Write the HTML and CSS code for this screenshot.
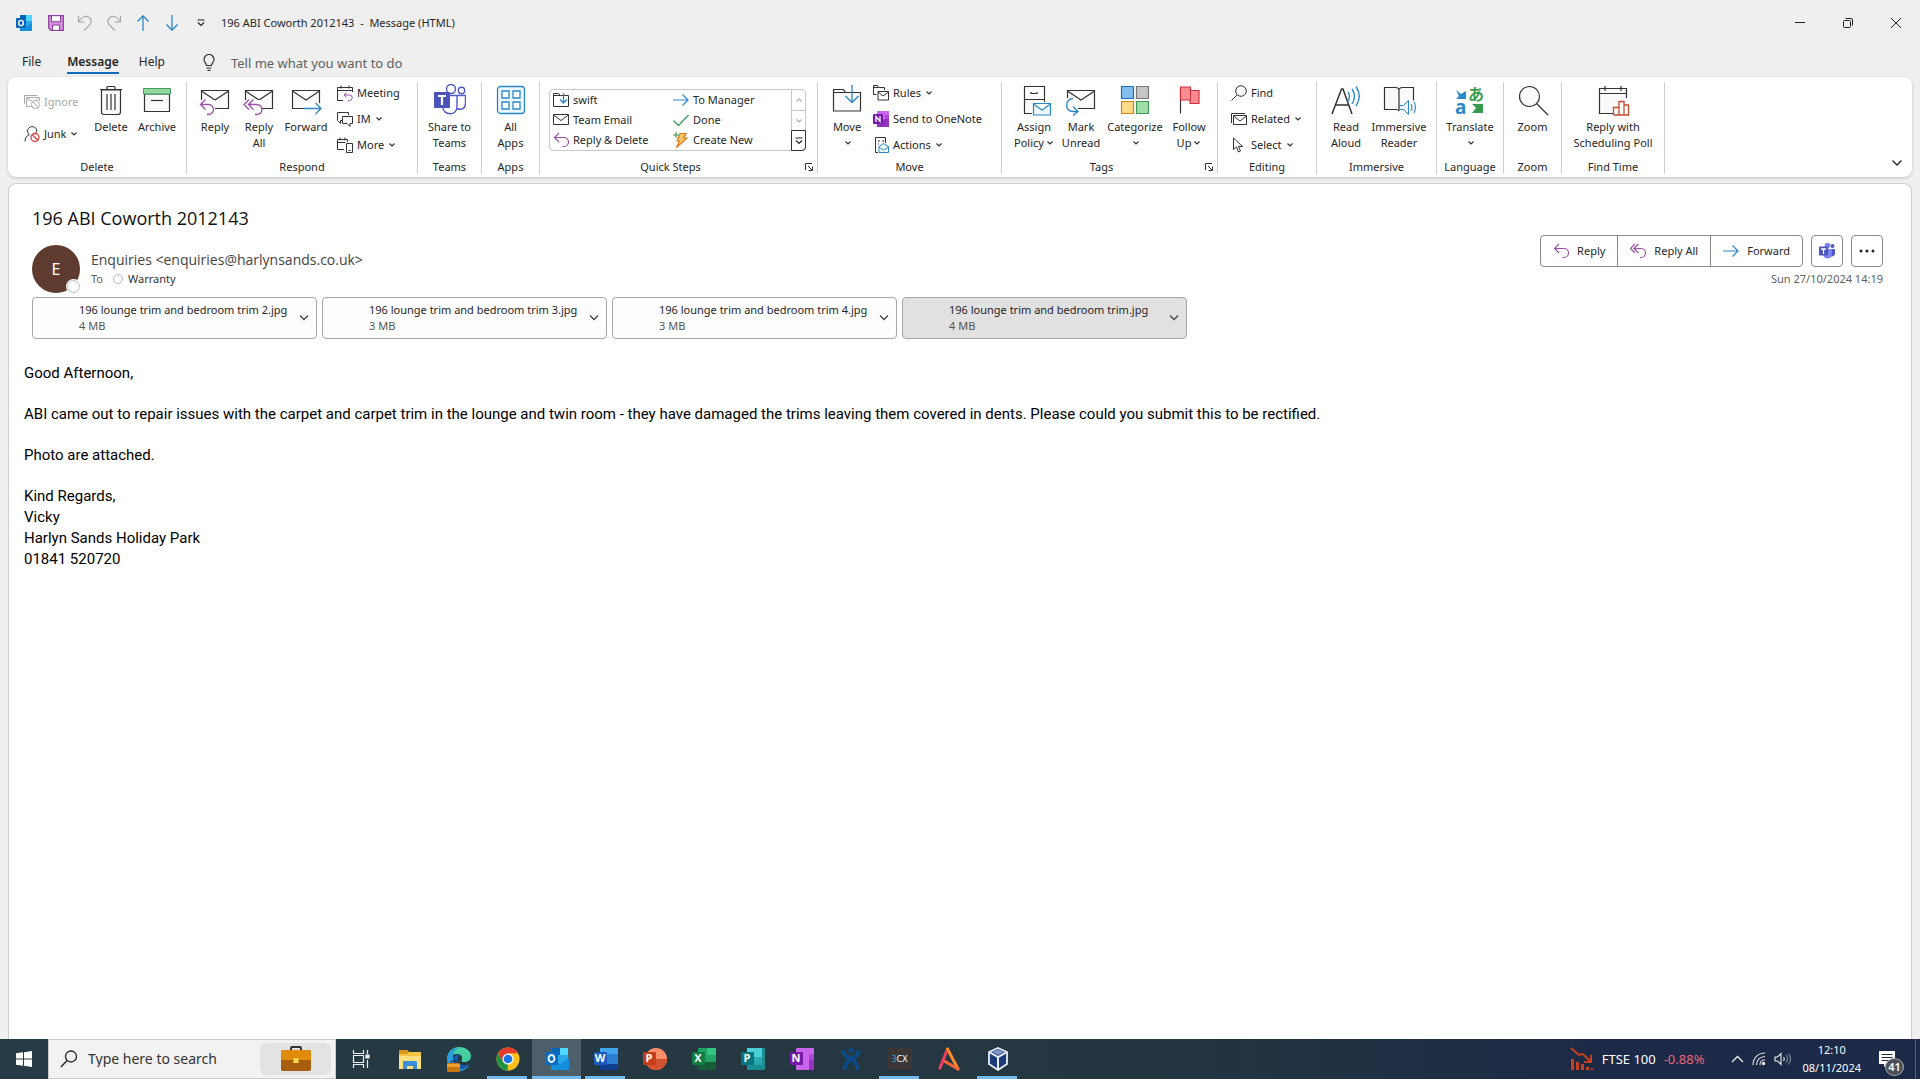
FILE: index.html
```html
<!DOCTYPE html>
<html lang="en">
<head>
<meta charset="utf-8">
<meta name="viewport" content="width=device-width, initial-scale=1">
<title>196 ABI Coworth 2012143 - Message (HTML)</title>
<link rel="stylesheet" href="styles.css">
</head>
<body>
<svg class="sprite" aria-hidden="true">
  <symbol id="chev" viewBox="0 0 8 8"><path d="M1.5 2.5 4 5l2.500-2.500" fill="none" stroke="#333" stroke-width="1.200"/></symbol>
  <symbol id="envelope" viewBox="0 0 32 32"><path d="M2.500 6.500h27v18h-27zM2.500 7 16 16 29.500 7" fill="#fafafa" stroke="#333" stroke-width="1.200"/></symbol>
  <symbol id="reply" viewBox="0 0 16 16"><path d="M6 1 1.500 5.500 6 10M1.500 5.500H11a4.500 4.500 0 0 1 0 9H9.500" fill="none" stroke="#9b4fa8" stroke-width="1.200"/></symbol>
  <symbol id="replyall" viewBox="0 0 16 16"><path d="M5 1 .500 5.500 5 10M8.500 1 4 5.500 8.500 10M4 5.500h7a4.500 4.500 0 0 1 0 9h-1" fill="none" stroke="#9b4fa8" stroke-width="1.200"/></symbol>
  <symbol id="forward" viewBox="0 0 16 16"><path d="M0 8h15M9.500 2.500 15 8l-5.500 5.500" fill="none" stroke="#2b88c8" stroke-width="1.200"/></symbol>
  <symbol id="launch" viewBox="0 0 8 8"><path d="M7 .5H.5V7M3 3l4 4M7.500 3.500v4h-4" fill="none" stroke="#333"/></symbol>
  <symbol id="drop" viewBox="0 0 10 10"><path d="M1.500 2h7M2 4.500 5 7.500l3-3" fill="none" stroke="#222" stroke-width="1.200"/></symbol>
  <symbol id="teams" viewBox="0 0 32 32"><g fill="#fff" stroke="#5059c9" stroke-width="1.400"><circle cx="27.500" cy="6.500" r="3.200"/><circle cx="17" cy="5" r="4.500"/><path d="M23 11.500h8.500v8c0 5-4 7-8.500 5M9 11.500h14v11c0 10-14 9-14 1"/></g><rect y="8" width="16" height="16" rx="1" fill="#4b53bc"/><path d="M4 12h8M8 12v9" stroke="#fff" stroke-width="2.200"/></symbol>
</svg>

<header class="titlebar">
  <div class="quick-access">
    <svg width="16" height="16" viewBox="0 0 16 16"><path d="M4 0h12v14H4z" fill="#28a8ea"/><path d="M4 0h6v6H4z" fill="#0364b8"/><path d="M10 0h6v6h-6z" fill="#50d9ff"/><path d="M4 8l6 4 6-4v8H4z" fill="#1490df"/><rect y="3" width="10" height="10" rx="1" fill="#0a64b8"/><ellipse cx="5" cy="8" rx="2.300" ry="2.600" fill="none" stroke="#fff" stroke-width="1.400"/></svg>
    <button aria-label="Save"><svg width="16" height="16" viewBox="0 0 16 16"><path d="M.7.7h14.600v14.600H3L.7 13z" fill="#d98fe0" stroke="#8b3a9b" stroke-width="1.200"/><path d="M3.500.700h9v6h-9zM4.500 10h7v5.300h-7z" fill="#fff" stroke="#8b3a9b"/></svg></button>
    <button aria-label="Undo"><svg width="16" height="16" viewBox="0 0 16 16"><path d="M1.500 1v6h6M1.500 7C5 1 9 .500 12 2.500c4 3 2 6.500-1 9L7 15.500" fill="none" stroke="#aaa" stroke-width="1.200"/></svg></button>
    <button aria-label="Redo"><svg width="16" height="16" viewBox="0 0 16 16"><path d="M14.500 1v6h-6M14.500 7C11 1 7 .500 4 2.500c-4 3-2 6.500 1 9l4 4" fill="none" stroke="#aaa" stroke-width="1.200"/></svg></button>
    <button aria-label="Previous item"><svg width="16" height="16" viewBox="0 0 16 16"><path d="M8 16V.800M2.500 6.500 8 .800l5.500 5.700" fill="none" stroke="#2b88c8" stroke-width="1.300"/></svg></button>
    <button aria-label="Next item"><svg width="16" height="16" viewBox="0 0 16 16"><path d="M8 0v15.200M2.500 9.500 8 15.200l5.500-5.700" fill="none" stroke="#2b88c8" stroke-width="1.300"/></svg></button>
    <button aria-label="Customize toolbar"><svg width="10" height="10"><use href="#drop"/></svg></button>
  </div>
  <h1 class="window-title">196 ABI Coworth 2012143&nbsp; -&nbsp; Message (HTML)</h1>
  <div class="window-buttons">
    <button aria-label="Minimize"><svg width="12" height="12"><path d="M1 5.500h10" stroke="#222"/></svg></button>
    <button aria-label="Restore"><svg width="12" height="12" fill="none" stroke="#222"><rect x="1.500" y="3.500" width="7" height="7" rx="1"/><path d="M3.500 1.500H9q1.500 0 1.500 1.500v5.500"/></svg></button>
    <button aria-label="Close"><svg width="12" height="12"><path d="M1 1l10 10M11 1 1 11" stroke="#222"/></svg></button>
  </div>
</header>

<nav class="tabs">
  <a href="#file">File</a>
  <a href="#message" class="active">Message</a>
  <a href="#help">Help</a>
  <label class="tell-me">
    <svg width="12" height="17" viewBox="0 0 12 17"><path d="M3.500 11.500C3.500 9 1 8.500 1 5.500a5 5 0 0 1 10 0c0 3-2.500 3.500-2.500 6zM3.500 14h5M4.500 16.300h3" fill="none" stroke="#333" stroke-width="1.200"/></svg>
    <input type="text" placeholder="Tell me what you want to do">
  </label>
</nav>

<section class="ribbon" aria-label="Ribbon">
  <div class="group g-delete">
    <div class="tools">
      <div class="stack two w64">
        <button disabled><svg width="16" height="16" viewBox="0 0 16 16" fill="none" stroke="#aaa"><path d="M.5 10V1.500h13M9 12.500H2.500v-9h13V7M2.500 4 9 8l5-3"/><circle cx="11.500" cy="10.500" r="4" fill="#fff"/><path d="M9 8l5 5"/></svg>Ignore</button>
        <button><svg width="16" height="16" viewBox="0 0 16 16" fill="none"><path d="M1 15.500c0-4 2-6 4-6.500M5.500 9C2 6 3.500.700 8 .700S14 5 11.500 7" stroke="#333"/><circle cx="11" cy="11.500" r="4" stroke="#d64545" stroke-width="1.300"/><path d="M8.200 8.700l5.600 5.600" stroke="#d64545" stroke-width="1.300"/></svg>Junk<svg class="chev"><use href="#chev"/></svg></button>
      </div>
      <button class="big w46"><svg viewBox="0 0 32 32"><path d="M6.500 6h19v22q0 2.500-2.500 2.500H9q-2.500 0-2.500-2.500zM5 5.500h22M12 5V3.500Q12 2.500 13 2.500h6q1 0 1 1V5M12 10v16M16 10v16M20 10v16" fill="#fafafa" stroke="#333" stroke-width="1.200"/></svg><span>Delete</span></button>
      <button class="big w46"><svg viewBox="0 0 32 32"><path d="M3.500 10h25v17.500h-25z" fill="#fafafa" stroke="#333" stroke-width="1.200"/><path d="M2.500 4.500h27V10h-27z" fill="#90d7a0" stroke="#3f9b58"/><path d="M10 16.500h12" stroke="#333" stroke-width="1.200"/></svg><span>Archive</span></button>
    </div>
    <h2>Delete</h2>
  </div>
  <div class="group g-respond">
    <div class="tools">
      <button class="big w44"><svg viewBox="0 0 32 32"><use href="#envelope"/><path d="M0 16h16v12H0z" fill="#fff"/><path d="M6.500 15.500 1.500 20.500l5 5M1.500 20.500h8a5 5 0 0 1 0 10H8" fill="none" stroke="#9b4fa8" stroke-width="1.300"/></svg><span>Reply</span></button>
      <button class="big w44"><svg viewBox="0 0 32 32"><use href="#envelope"/><path d="M0 16h18v12H0z" fill="#fff"/><path d="M6 15.500 1 20.500l5 5M10.500 15.500l-5 5 5 5M5.500 20.500H14a5 5 0 0 1 0 10h-2" fill="none" stroke="#9b4fa8" stroke-width="1.300"/></svg><span>Reply<br>All</span></button>
      <button class="big w50"><svg viewBox="0 0 32 32"><use href="#envelope"/><path d="M14 19h18v9H14z" fill="#fff"/><path d="M14 24.500h17M25.500 19l5.500 5.500-5.500 5.500" fill="none" stroke="#2b88c8" stroke-width="1.300"/></svg><span>Forward</span></button>
      <div class="stack">
        <button><svg width="16" height="16" viewBox="0 0 16 16" fill="none" stroke="#333"><path d="M6 15.500H.5v-13h15V7M.5 5.500h15M4 .5v3M12 .5v3"/><path d="M9.500 7.500 7 10l2.500 2.500M7 10h5.500a2.500 2.500 0 0 1 0 5.500H11" stroke="#9b4fa8"/></svg>Meeting</button>
        <button><svg width="16" height="16" viewBox="0 0 16 16" fill="none" stroke="#333"><path d="M5 9.500H3.500v3l-3-3V1.500h11V4M5.500 5.500h10v7H13v3l-3-3H5.500z"/></svg>IM<svg class="chev"><use href="#chev"/></svg></button>
        <button><svg width="16" height="16" viewBox="0 0 16 16" fill="none" stroke="#333"><path d="M7 12.500H.5v-10h10V5M.5 5.500h8M3 .5v3M8 .5v3M9.500 6.500h6v9h-6zM11.500 13.500h2"/></svg>More<svg class="chev"><use href="#chev"/></svg></button>
      </div>
    </div>
    <h2>Respond</h2>
  </div>
  <div class="group g-teams center">
    <div class="tools"><button class="big w50"><svg viewBox="0 0 32 32"><use href="#teams"/></svg><span>Share to<br>Teams</span></button></div>
    <h2>Teams</h2>
  </div>
  <div class="group g-apps center">
    <div class="tools"><button class="big w44"><svg viewBox="0 0 32 32" fill="#fff" stroke="#2b88c8" stroke-width="1.300"><rect x="2.500" y="2.500" width="27" height="27" rx="3" fill="#eef7fd"/><path d="M7 7h7v7H7zM18 7h7v7h-7zM7 18h7v7H7zM18 18h7v7h-7z"/></svg><span>All<br>Apps</span></button></div>
    <h2>Apps</h2>
  </div>
  <div class="group g-quick">
    <div class="tools">
      <div class="gallery">
        <div class="steps">
          <button><svg width="16" height="16" viewBox="0 0 16 16" fill="none" stroke="#333"><path d="M8 3.500h7.500v11H.5v-13h5l2 2H.5"/><path d="M10.500 1v9.500M7 7.500l3.500 3.500L14 7.500" stroke="#2b88c8" stroke-width="1.300"/></svg>swift</button>
          <button><svg width="16" height="16"><use href="#forward"/></svg>To Manager</button>
          <button><svg width="16" height="16" viewBox="0 0 16 16"><path d="M.5 2.500h15v10H.5zM.5 3 8 8.500 15.500 3" fill="none" stroke="#333"/></svg>Team Email</button>
          <button><svg width="16" height="16" viewBox="0 0 16 16"><path d="M.5 8.500 5.500 13.500 15.500 3" fill="none" stroke="#3f9b58" stroke-width="1.300"/></svg>Done</button>
          <button><svg width="16" height="16"><use href="#reply"/></svg>Reply &amp; Delete</button>
          <button><svg width="16" height="16" viewBox="0 0 16 16"><path d="M7 1.500h6L10.500 6H14L3.500 15.500 6.500 9H4z" fill="#f9c66b" stroke="#e07b1a" stroke-width="1.200"/><path d="M3 0v6M0 3h6" stroke="#3f9b58" stroke-width="1.200"/></svg>Create New</button>
        </div>
        <div class="scroller">
          <button disabled aria-label="Scroll up"><svg class="up chev"><use href="#chev"/></svg></button>
          <button disabled aria-label="Scroll down"><svg class="chev"><use href="#chev"/></svg></button>
          <button class="more" aria-label="More quick steps"><svg width="10" height="10"><use href="#drop"/></svg></button>
        </div>
      </div>
    </div>
    <h2>Quick Steps</h2>
    <button class="launcher" aria-label="Quick Steps settings"><svg width="8" height="8"><use href="#launch"/></svg></button>
  </div>
  <div class="group g-move">
    <div class="tools">
      <button class="big w40"><svg viewBox="0 0 32 32"><path d="M2.500 27V5.500h10l2 3h15V27zM2.500 8.500h12" fill="#fafafa" stroke="#333" stroke-width="1.200"/><path d="M21 1v17M14.500 12l6.500 6.500 6.500-6.500" fill="none" stroke="#2b88c8" stroke-width="1.300"/></svg><span>Move<br><svg class="chev"><use href="#chev"/></svg></span></button>
      <div class="stack">
        <button><svg width="16" height="16" viewBox="0 0 16 16" fill="none" stroke="#333"><path d="M3.500 9.500h-3v-9h4l1 2h6V5M.500 2.500h5M5 6.500h10.500v8.500H5zM5 7l5 4 5.500-4"/></svg>Rules<svg class="chev"><use href="#chev"/></svg></button>
        <button><svg width="16" height="16" viewBox="0 0 16 16"><path d="M4 0h12v16H4z" fill="#ca64ea"/><path d="M12 4h4v4h-4z" fill="#ae4bd5"/><path d="M12 8h4v8H4v-4z" fill="#9332bf"/><rect y="3" width="10" height="10" rx="1" fill="#7719aa"/><path d="M3 11V5.500l4 5V5" fill="none" stroke="#fff" stroke-width="1.300"/></svg>Send to OneNote</button>
        <button><svg width="16" height="16" viewBox="0 0 16 16" fill="none" stroke="#333"><path d="M5 15.500H2.500V.5h10V6M5 4h2M9 4h2M5 7h1"/><path d="M6 9.500 10.500 6.500 15.500 9.500v6H6zM6 10l4.500 3 5-3" fill="#eef7fd" stroke="#2b88c8"/></svg>Actions<svg class="chev"><use href="#chev"/></svg></button>
      </div>
    </div>
    <h2>Move</h2>
  </div>
  <div class="group g-tags">
    <div class="tools">
      <button class="big w50"><svg viewBox="0 0 32 32"><path d="M14 29.500H6.500v-27h20V18M6.500 15.500h20M13 8v1.500h6V8" fill="none" stroke="#333" stroke-width="1.200"/><path d="M15.500 19.500h17v11.500h-17zM15.500 20l8.500 6 8.500-6" fill="#eef7fd" stroke="#2b88c8" stroke-width="1.200"/></svg><span>Assign<br>Policy<svg class="chev"><use href="#chev"/></svg></span></button>
      <button class="big w44"><svg viewBox="0 0 32 32"><use href="#envelope"/><path d="M0 14h13v14H0z" fill="#fff"/><path d="M8 14.500c-8 0-9 13 0 13h4M8 22.500l5 5-5 4" fill="none" stroke="#2b88c8" stroke-width="1.300"/></svg><span>Mark<br>Unread</span></button>
      <button class="big w64"><svg viewBox="0 0 32 32" stroke-width="1.200"><path d="M2.500 2.500h12v12h-12z" fill="#83beec" stroke="#1e6fb5"/><path d="M17.500 2.500h12v12h-12z" fill="#c8c6c4" stroke="#797775"/><path d="M2.500 17.500h12v12h-12z" fill="#f9dc8b" stroke="#d68500"/><path d="M17.500 17.500h12v12h-12z" fill="#a1dda9" stroke="#3f9b58"/></svg><span>Categorize<br><svg class="chev"><use href="#chev"/></svg></span></button>
      <button class="big w44"><svg viewBox="0 0 32 32"><path d="M7.500 3v26.500" stroke="#333" stroke-width="1.200"/><path d="M7.500 3h10v3.500h8.500v13h-9V16H7.500z" fill="#ff8a92" stroke="#c8323c" stroke-width="1.200"/><path d="M17.500 6v10" stroke="#c8323c"/></svg><span>Follow<br>Up<svg class="chev"><use href="#chev"/></svg></span></button>
    </div>
    <h2>Tags</h2>
    <button class="launcher" aria-label="Tags settings"><svg width="8" height="8"><use href="#launch"/></svg></button>
  </div>
  <div class="group g-editing">
    <div class="tools">
      <div class="stack">
        <button><svg width="16" height="16" viewBox="0 0 16 16" fill="none" stroke="#333"><circle cx="10" cy="6" r="5.300"/><path d="M6.300 9.700.500 15.500"/></svg>Find</button>
        <button><svg width="16" height="16" viewBox="0 0 16 16" fill="none" stroke="#333"><path d="M.5 12V2.500H14M2.500 4.500h13v9h-13zM2.500 5 9 10l6.500-5"/></svg>Related<svg class="chev"><use href="#chev"/></svg></button>
        <button><svg width="16" height="16" viewBox="0 0 16 16" fill="none" stroke="#333"><path d="M2.500 1v11.500l3-2.500 2 5 2-1-2-4.500h4z"/></svg>Select<svg class="chev"><use href="#chev"/></svg></button>
      </div>
    </div>
    <h2>Editing</h2>
  </div>
  <div class="group g-immersive">
    <div class="tools">
      <button class="big w46"><svg viewBox="0 0 32 32" fill="none"><path d="M2 30 11.500 5h1.500l9 25M5.500 21h13" stroke="#333" stroke-width="1.500"/><path d="M18 8q3 4 0 9M22 5q5 7 0 15M26 2.500q6.500 9.500 0 19.500" stroke="#2b88c8" stroke-width="1.400"/></svg><span>Read<br>Aloud</span></button>
      <button class="big w60"><svg viewBox="0 0 32 32"><path d="M16 27q-1-1.500-3-1.500H1.500v-22H13q2 0 3 2 1-2 3-2h11.500v13M16 5.500V27" fill="#fafafa" stroke="#333" stroke-width="1.200"/><path d="M16.500 21.500h4l5-5v14l-5-5h-4z" fill="#eef7fd" stroke="#2b88c8"/><path d="M28 20q2 3 0 7M31 18q3 5 0 11" fill="none" stroke="#2b88c8" stroke-width="1.200"/></svg><span>Immersive<br>Reader</span></button>
    </div>
    <h2>Immersive</h2>
  </div>
  <div class="group g-language center">
    <div class="tools"><button class="big w60"><svg viewBox="0 0 32 32"><path d="M2 6l5 4 5-3v8H2l3-3z" fill="#2b88c8"/><path d="M29 20H18l4 4-4 5h11z" fill="#3a9b50"/><text x="1" y="30" class="glyph-a">a</text><text x="14" y="16" class="glyph-ja">あ</text></svg><span>Translate<br><svg class="chev"><use href="#chev"/></svg></span></button></div>
    <h2>Language</h2>
  </div>
  <div class="group g-zoom center">
    <div class="tools"><button class="big w44"><svg viewBox="0 0 32 32"><circle cx="12.500" cy="12.500" r="10" fill="#fafafa" stroke="#333" stroke-width="1.200"/><path d="M19.500 19.500 31 31" stroke="#333" stroke-width="1.200"/></svg><span>Zoom</span></button></div>
    <h2>Zoom</h2>
  </div>
  <div class="group g-findtime center">
    <div class="tools"><button class="big w90"><svg viewBox="0 0 32 32"><path d="M16 29.500H2.500v-25h27V14M2.500 9.500h27M8 2v5M24 2v5" fill="#fafafa" stroke="#333" stroke-width="1.200"/><path d="M16.500 31v-7.500H22V31M22 31V17.500h5V31M27 21h4.500v10h-15" fill="#fff" stroke="#c8482c" stroke-width="1.300"/></svg><span>Reply with<br>Scheduling Poll</span></button></div>
    <h2>Find Time</h2>
  </div>
  <button class="collapse" aria-label="Collapse ribbon"><svg width="12" height="8"><path d="M1.500 1.500 6 6l4.500-4.500" fill="none" stroke="#222" stroke-width="1.300"/></svg></button>
</section>

<main class="message">
  <div class="head">
    <h2 class="subject">196 ABI Coworth 2012143</h2>
    <div class="who">
      <div class="avatar">E<i></i></div>
      <div class="people">
        <div class="from">Enquiries &lt;enquiries@harlynsands.co.uk&gt;</div>
        <div class="to"><span>To</span><i></i><b>Warranty</b></div>
      </div>
      <div class="actions">
        <div class="row">
          <div class="joined">
            <button><svg width="16" height="16"><use href="#reply"/></svg>Reply</button>
            <button><svg width="16" height="16"><use href="#replyall"/></svg>Reply All</button>
            <button><svg width="16" height="16"><use href="#forward"/></svg>Forward</button>
          </div>
          <button class="square" aria-label="Share to Teams"><svg width="18" height="18" viewBox="0 0 18 18"><circle cx="14.500" cy="4" r="2" fill="#5059c9"/><circle cx="9.500" cy="3.500" r="2.800" fill="#7b83eb"/><path d="M12 7h5v5q-1 3-4 2.500z" fill="#5059c9"/><path d="M5 7h9v5c0 6-9 6-9 0z" fill="#7b83eb"/><rect x="1" y="4.500" width="9" height="9" rx="1" fill="#4b53bc"/><path d="M3 7h5M5.500 7v5" stroke="#fff" stroke-width="1.300"/></svg></button>
          <button class="square" aria-label="More actions"><svg width="16" height="4" fill="#222"><circle cx="2" cy="2" r="1.500"/><circle cx="8" cy="2" r="1.500"/><circle cx="14" cy="2" r="1.500"/></svg></button>
        </div>
        <time datetime="2024-10-27T14:19">Sun 27/10/2024 14:19</time>
      </div>
    </div>
    <div class="attachments">
      <button><span>196 lounge trim and bedroom trim 2.jpg<small>4 MB</small></span><svg width="10" height="8"><path d="M1 1.500l4 4 4-4"/></svg></button>
      <button><span>196 lounge trim and bedroom trim 3.jpg<small>3 MB</small></span><svg width="10" height="8"><path d="M1 1.500l4 4 4-4"/></svg></button>
      <button><span>196 lounge trim and bedroom trim 4.jpg<small>3 MB</small></span><svg width="10" height="8"><path d="M1 1.500l4 4 4-4"/></svg></button>
      <button class="selected"><span>196 lounge trim and bedroom trim.jpg<small>4 MB</small></span><svg width="10" height="8"><path d="M1 1.500l4 4 4-4"/></svg></button>
    </div>
  </div>
  <article class="body">
    <p>Good Afternoon,</p>
    <p>ABI came out to repair issues with the carpet and carpet trim in the lounge and twin room - they have damaged the trims leaving them covered in dents. Please could you submit this to be rectified.</p>
    <p>Photo are attached.</p>
    <p>Kind Regards,<br>Vicky<br>Harlyn Sands Holiday Park<br>01841 520720</p>
  </article>
</main>

<footer class="taskbar">
  <button class="start" aria-label="Start"><svg width="16" height="16" fill="#fff"><path d="M0 2.300 7 1.300V7.500H0zM8 1.200 16 0v7.500H8zM0 8.500h7v6.200L0 13.700zM8 8.500h8V16l-8-1.200z"/></svg></button>
  <label class="search">
    <svg width="18" height="18" viewBox="0 0 18 18" fill="none" stroke="#222" stroke-width="1.300"><circle cx="11" cy="6.500" r="5.500"/><path d="M7 10.500 1 17"/></svg>
    <input type="text" placeholder="Type here to search">
    <span class="highlight"><svg width="32" height="26" viewBox="0 0 32 26"><path d="M11 5V2q0-1 1-1h8q1 0 1 1v3" fill="none" stroke="#333" stroke-width="2"/><rect x="1" y="4" width="30" height="21" rx="2" fill="#a85e0c"/><path d="M1 6q0-2 2-2h26q2 0 2 2v8H1z" fill="#e08a0e"/><rect x="13.500" y="12" width="5" height="5" fill="#ffd84a"/></svg></span>
  </label>
  <div class="apps">
    <button aria-label="Task view"><svg width="18" height="18" fill="none" stroke="#eee" stroke-width="1.200"><path d="M1.500 0v3.500h10V0M1.500 5.500h10v7h-10zM1.500 18v-3.500h10V18M15.500 0v4M15.500 10v8"/><path d="M14 5h3v3h-3z" fill="#eee"/></svg></button>
    <button aria-label="File Explorer"><svg width="24" height="24"><path d="M1 3h8l2 2h12v16H1z" fill="#f5c445"/><path d="M1 3h8l2 2-2 2H1z" fill="#d9971c"/><path d="M1 9h22v13H1z" fill="#ffdf7e"/><path d="M5 22v-7q0-1 1-1h12q1 0 1 1v7h-4v-3H9v3z" fill="#3a8fd6"/></svg></button>
    <button aria-label="Edge"><svg width="26" height="26"><path d="M1 14A12 12 0 0 1 13 1c7 0 12 4 12 9 0 4-3 6-7 6-2 0-3-1-2-3 1-3-2-5-5-5-5 0-9 3-10 6z" fill="#45cfa0"/><path d="M1 14C1 6 6 2 12 2c-5 3-5 7-5 10 0 6 5 10 10 9 3 0 5-1 6-2-2 4-6 6-10 6A12 12 0 0 1 1 14z" fill="#2a9fe0"/><path d="M7 13c1-4 5-5 7-4-4 3-3 10 4 10 2 0 4 0 5-1-2 4-6 6-9 5-4-1-7-5-7-10z" fill="#1459a8"/><rect x="1" y="17" width="13" height="9" rx="1" fill="#c9740c"/><path d="M5 17v-2h5v2" fill="none" stroke="#333"/><path d="M1 18h13v3H1z" fill="#eda02a"/></svg></button>
    <button class="running" aria-label="Chrome"><svg width="24" height="24"><circle cx="12" cy="12" r="11.500" fill="#fbc116"/><path d="M2 6.300A11.500 11.500 0 0 1 22 6.300H12L7 15z" fill="#e33b2e"/><path d="M2 6.300 7.300 15 12 17.500 11.500 23.500A11.500 11.500 0 0 1 2 6.300z" fill="#229342"/><circle cx="12" cy="12" r="5.500" fill="#fff"/><circle cx="12" cy="12" r="4.300" fill="#1a73e8"/></svg></button>
    <button class="running active" aria-label="Outlook"><svg width="24" height="24"><path d="M7 1h16v20H7z" fill="#28a8ea"/><path d="M7 1h8v7H7z" fill="#0364b8"/><path d="M15 1h8v7h-8z" fill="#50d9ff"/><path d="M6 11l9 6 9-6v12H6z" fill="#1490df"/><rect y="5" width="13" height="13" rx="1" fill="#0a6cc0"/><ellipse cx="6.500" cy="11.500" rx="3" ry="3.500" fill="none" stroke="#fff" stroke-width="1.800"/></svg></button>
    <button class="running" aria-label="Word"><svg width="24" height="24"><rect x="6" y="1" width="18" height="22" rx="1" fill="#2b7cd3"/><path d="M6 1h18v6H6z" fill="#41a5ee"/><path d="M6 17h18v6H6z" fill="#103f91"/><rect y="5" width="13" height="13" rx="1" fill="#185abd"/><text x="6" y="15" class="badge">W</text></svg></button>
    <button aria-label="PowerPoint"><svg width="24" height="24"><circle cx="13" cy="12" r="11" fill="#ff8f6b"/><path d="M2 12h22a11 11 0 0 1-22 0z" fill="#d35230"/><rect y="5" width="13" height="13" rx="1" fill="#c43e1c"/><text x="6" y="15" class="badge">P</text></svg></button>
    <button aria-label="Excel"><svg width="24" height="24"><rect x="6" y="1" width="18" height="22" rx="1" fill="#21a366"/><path d="M15 1h9v7h-9z" fill="#33c481"/><path d="M6 15h18v8H6z" fill="#185c37"/><rect y="5" width="13" height="13" rx="1" fill="#107c41"/><text x="6" y="15" class="badge">X</text></svg></button>
    <button aria-label="Publisher"><svg width="24" height="24"><rect x="6" y="1" width="18" height="22" rx="1" fill="#1a8c94"/><path d="M6 1h15v9H6z" fill="#4ad0d5"/><path d="M6 10h15v8H6z" fill="#29a8ae"/><rect y="5" width="13" height="13" rx="1" fill="#06757d"/><text x="6" y="15" class="badge">P</text></svg></button>
    <button aria-label="OneNote"><svg width="24" height="24"><rect x="6" y="1" width="18" height="22" rx="1" fill="#ca64ea"/><path d="M19 7h5v6h-5z" fill="#ae4bd5"/><path d="M19 13h5v10h-5z" fill="#9332bf"/><rect y="5" width="13" height="13" rx="1" fill="#7719aa"/><text x="6" y="15" class="badge">N</text></svg></button>
    <button aria-label="Jira"><svg width="24" height="24" fill="none" stroke="#0c4a86"><circle cx="12" cy="3.500" r="2.500" fill="#0c4a86" stroke="none"/><path d="M4 3q0 6 8 8.500Q20 9 20 3M12 11.500q-6 4-6.500 11.500M12 11.500q6 4 6.500 11.500" stroke-width="4"/></svg></button>
    <button class="running" aria-label="3CX"><span class="cx"><em>3</em>CX</span></button>
    <button aria-label="Affinity"><svg width="24" height="24" fill="none" stroke-width="3" stroke-linecap="round" stroke-linejoin="round"><path d="M3 21 10.500 2" stroke="#ee3f62"/><path d="M10.500 2 21 22" stroke="#ff8a2a"/><path d="M21 22 8 14.500" stroke="#f9653a"/></svg></button>
    <button class="running" aria-label="VirtualBox"><svg width="24" height="24"><path d="M12 1l9 4v12l-9 6-9-6V5z" fill="#1c3a78" stroke="#e8edf6" stroke-width="1.800"/><path d="M3 5l9 5 9-5M12 10v13" fill="none" stroke="#e8edf6" stroke-width="2"/><path d="M6 5l6-2.500L18 5l-6 3z" fill="#7c95c4"/></svg></button>
  </div>
  <div class="tray">
    <button class="news"><svg width="24" height="24" fill="none" stroke="#c8401e" stroke-width="2"><path d="M1 1l8 7 4-1 7 7M21 8v7h-7"/><path d="M2.500 12v11M7.500 15v8M12.500 17v6M17.500 20v3M22 21.500v1.500" stroke-width="3"/></svg>FTSE 100<span>-0.88%</span></button>
    <button aria-label="Hidden icons"><svg width="13" height="8"><path d="M1 7l5.500-5.500L12 7" fill="none" stroke="#eee" stroke-width="1.300"/></svg></button>
    <button aria-label="Network"><svg width="14" height="14" fill="none" stroke="#ddd" stroke-width="1.200"><path d="M1 13C1 6 6 1 13 1M4.500 13c0-5 3.500-8.500 8.500-8.500M8 13c0-3 2-5 5-5"/><circle cx="11.500" cy="11.500" r="1.200" fill="#fff"/></svg></button>
    <button aria-label="Volume"><svg width="17" height="14" fill="none" stroke="#eee" stroke-width="1.100"><path d="M1 5h2.500L7 1.500v11L3.500 9H1zM9.500 5q1.500 2 0 4"/><path d="M12 3q3 4 0 8M14.500 1.500q4 5.500 0 11" stroke="#7c8797"/></svg></button>
    <time class="clock" datetime="2024-11-08T12:10">12:10<br>08/11/2024</time>
    <button class="notify" aria-label="Notifications"><svg width="16" height="16"><path d="M0 0h16v13H8l-3 3v-3H0z" fill="#fff"/><path d="M2.500 3.500h11M2.500 6.500h11M2.500 9.500h8" stroke="#1e2b44"/></svg><span>41</span></button>
  </div>
</footer>
</body>
</html>
```
FILE: styles.css
```css
* { box-sizing: border-box; }
html { height: 100%; }
body {
  margin: 0;
  min-height: 100%;
  display: flex;
  flex-direction: column;
  background: #efefef;
  color: #262626;
  font: 11px/16px "Noto Sans", "Open Sans", sans-serif;
}
h1, h2, p { margin: 0; font-weight: 400; }
button {
  display: flex;
  align-items: center;
  justify-content: center;
  padding: 0;
  border: 0;
  background: none;
  color: inherit;
  font: inherit;
  white-space: nowrap;
}
button:disabled { color: #a8a8a8; }
input {
  min-width: 0;
  padding: 0;
  border: 0;
  background: none;
  font: inherit;
  outline: 0;
}
svg { flex: none; }
.sprite { position: absolute; width: 0; height: 0; }
.chev { width: 8px; height: 8px; margin-left: 2px; }
.up { transform: rotate(180deg); }

/* title bar */
.titlebar { display: flex; align-items: center; height: 46px; padding: 0 0 0 16px; }
.quick-access { display: flex; align-items: center; gap: 13px; }
.quick-access > svg { margin-right: 3px; }
.quick-access > button:last-child { margin-left: 3px; }
.window-title { margin-left: 15px; font-size: 11px; white-space: nowrap; }
.window-buttons { display: flex; margin-left: auto; }
.window-buttons button { width: 48px; height: 32px; }

/* ribbon tabs */
.tabs { display: flex; align-items: center; height: 31px; padding: 2px 22px 0; font-size: 12px; }
.tabs a { color: inherit; text-decoration: none; line-height: 20px; border-bottom: 2px solid transparent; }
.tabs a + a { margin-left: 26px; }
.tabs a.active { font-weight: 600; border-color: #0f6cbd; }
.tabs a.active + a { margin-left: 20px; }
.tell-me { display: flex; align-items: center; gap: 16px; margin-left: 38px; font-size: 13px; }
.tell-me input { width: 220px; }
.tell-me input::placeholder { color: #616161; opacity: 1; }

/* ribbon */
.ribbon {
  position: relative;
  display: flex;
  margin: 0 8px;
  padding: 5px 0 3px;
  background: #fff;
  border-radius: 8px;
  box-shadow: 0 1px 3px #0003;
}
.group {
  position: relative;
  display: flex;
  flex-direction: column;
  border-right: 1px solid #d0d0d0;
}
.group h2 { font-size: 11px; line-height: 14px; text-align: center; }
.tools { display: flex; height: 78px; }
.center .tools { justify-content: center; }
.g-delete { width: 179px; }
.g-delete .tools { padding-left: 16px; }
.g-respond { width: 231px; }
.g-respond .tools { padding-left: 6px; }
.g-teams { width: 64px; }
.g-apps { width: 58px; }
.g-quick { width: 278px; }
.g-quick .tools { padding: 7px 11px 9px 9px; }
.g-quick h2, .g-tags h2 { padding-right: 16px; }
.g-move { width: 184px; }
.g-move .tools { padding-left: 9px; }
.g-tags { width: 216px; }
.g-tags .tools { padding-left: 7px; }
.g-editing { width: 99px; }
.g-editing .tools { padding-left: 7px; }
.g-immersive { width: 120px; }
.g-immersive .tools { padding-left: 6px; }
.g-language { width: 67px; }
.g-zoom { width: 58px; }
.g-findtime { width: 103px; }
.big { flex-direction: column; justify-content: flex-start; padding-top: 2px; }
.big > svg { width: 32px; height: 32px; margin-bottom: 3px; overflow: visible; }
.w40 { width: 40px; }
.w44 { width: 44px; }
.w46 { width: 46px; }
.w50 { width: 50px; }
.w60 { width: 60px; }
.w64 { width: 64px; }
.w90 { width: 90px; }
.stack { display: flex; flex-direction: column; gap: 10px; padding: 3px 0 0 6px; }
.stack button { justify-content: flex-start; gap: 4px; }
.stack .chev { margin-left: 0; }
.stack.two { gap: 16px; padding: 12px 0 0; }
.glyph-a { font: 700 19px "Noto Sans", sans-serif; fill: #2b88c8; }
.glyph-ja { font: 700 16px "Noto Sans CJK JP", sans-serif; fill: #3a9b50; }
.gallery { display: flex; flex: 1; border: 1px solid #c8c8c8; border-radius: 4px; }
.steps { flex: 1; display: grid; grid-template: repeat(3, 1fr) / 120px 1fr; padding-left: 3px; }
.steps button { justify-content: flex-start; gap: 4px; }
.scroller { display: grid; grid-template-rows: repeat(3, 1fr); width: 14px; border-left: 1px solid #c8c8c8; }
.scroller button + button { border-top: 1px solid #c8c8c8; }
.scroller .chev { margin: 0; opacity: .4; }
.scroller button.more { margin: 0 -1px -1px; border: 1px solid #333; border-radius: 0 0 4px 0; }
.launcher { position: absolute; right: 4px; bottom: 3px; }
.collapse { position: absolute; right: 9px; bottom: 10px; }

/* message */
.message {
  flex: 1;
  margin: 6px 8px 0;
  background: #fff;
  border: 1px solid #d0d0d0;
  border-bottom: 0;
  border-radius: 8px 8px 0 0;
}
.head { padding: 22px 28px 0 23px; }
.subject { font: 18px/24px "Open Sans", sans-serif; color: #111; }
.who { display: flex; align-items: flex-start; height: 67px; }
.avatar {
  position: relative;
  width: 48px;
  height: 48px;
  margin: 15px 11px 0 0;
  border-radius: 50%;
  background: #5f3b2f;
  color: #fff;
  font-size: 16px;
  line-height: 48px;
  text-align: center;
}
.avatar i {
  position: absolute;
  right: 0;
  bottom: 0;
  width: 13px;
  height: 13px;
  border: 1px solid #b4c2c8;
  border-radius: 50%;
  background: #fff;
  box-shadow: 0 0 0 1px #fff;
}
.people { padding-top: 20px; color: #444; }
.from { font: 14px/20px "Open Sans", sans-serif; }
.to { display: flex; align-items: center; line-height: 18px; color: #616161; }
.to i { width: 10px; height: 10px; margin: 0 5px 0 10px; border: 1px solid #a9c3d0; border-radius: 50%; }
.to b { font-weight: 400; color: #333; }
.actions { margin-left: auto; padding-top: 5px; text-align: right; color: #616161; }
.row { display: flex; justify-content: flex-end; gap: 8px; margin-bottom: 4px; color: #262626; }
.joined, .square { height: 32px; border: 1px solid #8a8a8a; border-radius: 4px; }
.joined { display: flex; }
.joined button { gap: 8px; padding: 0 12px; }
.joined button + button { border-left: 1px solid #8a8a8a; }
.square { width: 32px; }
.attachments { display: flex; gap: 5px; }
.attachments button {
  width: 285px;
  height: 42px;
  padding: 0 7px 0 46px;
  justify-content: space-between;
  border: 1px solid #a6a6a6;
  border-radius: 4px;
  background: #fdfdfd;
  text-align: left;
}
.attachments .selected { background: #e1e1e1; }
.attachments small { display: block; font-size: 11px; color: #555; }
.attachments path { fill: none; stroke: #444; stroke-width: 1.3; }
.body {
  display: grid;
  gap: 20px;
  padding: 24px 15px;
  color: #000;
  font: 15px/21px Roboto, "Liberation Sans", sans-serif;
}

/* taskbar */
.taskbar {
  display: flex;
  height: 40px;
  background: linear-gradient(90deg, #263b45, #243640 60%, #1c2947 85%);
  color: #fff;
}
.start { width: 48px; }
.search {
  display: flex;
  align-items: center;
  width: 288px;
  padding: 0 4px 0 11px;
  border: 1px solid #ccc;
  background: #f2f2f2;
}
.search input { flex: 1; margin-left: 10px; font-size: 14px; }
.search input::placeholder { color: #333; opacity: 1; }
.highlight { display: flex; align-items: center; justify-content: center; width: 71px; height: 32px; border-radius: 6px; background: #e3e3e3; }
.apps { display: flex; }
.apps button { position: relative; width: 49px; }
.running::after {
  content: "";
  position: absolute;
  right: 5px;
  bottom: 0;
  left: 4px;
  height: 3px;
  background: #76b9ed;
}
.active.running { background: #4d5f69; }
.active.running::after { right: 0; left: 0; }
.badge { font: 700 11px "Open Sans", sans-serif; fill: #fff; text-anchor: middle; }
.cx { width: 24px; height: 22px; background: #3b3736; font-size: 9px; line-height: 22px; }
.cx em { color: #2b9fd6; font-style: normal; }
.tray { display: flex; align-items: center; margin-left: auto; margin-right: 4px; padding-right: 20px; border-right: 1px solid #5a6478; }
.tray button { margin-right: 8px; }
.tray .news { gap: 8px; margin-right: 27px; font-size: 13px; }
.news span { color: #e8657a; }
.clock { margin: 0 18px 0 3px; text-align: center; line-height: 18px; }
.tray .notify { position: relative; margin-right: 0; }
.notify span {
  position: absolute;
  top: 7px;
  left: 6px;
  width: 19px;
  height: 18px;
  border: 1px solid #aaa;
  border-radius: 50%;
  background: #4a4f58;
  line-height: 16px;
  font-weight: 600;
}
```
